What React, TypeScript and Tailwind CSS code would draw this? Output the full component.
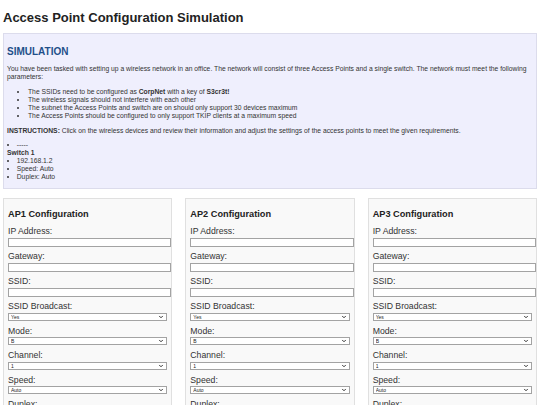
import { ChevronDown } from "lucide-react";

const requirements = [
  <>
    The SSIDs need to be configured as <strong>CorpNet</strong> with a key of <strong>S3cr3t!</strong>
  </>,
  <>The wireless signals should not interfere with each other</>,
  <>The subnet the Access Points and switch are on should only support 30 devices maximum</>,
  <>The Access Points should be configured to only support TKIP clients at a maximum speed</>,
];

const selects = [
  { label: "SSID Broadcast:", options: ["Yes", "No"] },
  { label: "Mode:", options: ["B", "G", "N", "AC"] },
  { label: "Channel:", options: ["1", "6", "11"] },
  { label: "Speed:", options: ["Auto", "11 Mbps", "54 Mbps"] },
  { label: "Duplex:", options: ["Auto", "Half", "Full"] },
  { label: "Security:", options: ["None", "WEP", "WPA (TKIP)", "WPA2 (AES)"] },
];

const Label = ({ text }: { text: string }) => (
  <label className="mb-[1.5px] block text-[8.7px] leading-[9px] text-[#333]">{text}</label>
);

const InputField = ({ label }: { label: string }) => (
  <div className="mb-[5.5px]">
    <Label text={label} />
    <input
      type="text"
      className="box-content block h-[7px] w-full border border-[#a3a3a3] bg-white px-[1px] text-[6px] outline-none"
    />
  </div>
);

const SelectField = ({ label, options }: { label: string; options: string[] }) => (
  <div className="mb-[6px]">
    <Label text={label} />
    <div className="relative">
      <select className="block h-[8px] w-full appearance-none border border-[#a3a3a3] bg-white py-0 pl-[2px] text-[5px] leading-[6px] text-[#222] outline-none">
        {options.map((o) => (
          <option key={o}>{o}</option>
        ))}
      </select>
      <ChevronDown
        size={6}
        strokeWidth={4}
        className="pointer-events-none absolute top-[1px] right-[3px] text-[#333]"
      />
    </div>
  </div>
);

const ApCard = ({ n }: { n: number }) => (
  <div className="border border-[#e0e0e0] bg-[#f9f9f9] p-[4px]">
    <h3 className="mt-[5px] mb-[7.5px] text-[9.2px] leading-[12px] font-bold text-[#222]">
      AP{n} Configuration
    </h3>
    <InputField label="IP Address:" />
    <InputField label="Gateway:" />
    <InputField label="SSID:" />
    {selects.map((s) => (
      <SelectField key={s.label} label={s.label} options={s.options} />
    ))}
    <InputField label="Key:" />
  </div>
);

export default function App() {
  return (
    <div className="min-h-screen bg-white px-[3px] pb-[10px] font-['Liberation_Sans',Arial,sans-serif] text-[#222]">
      <h1 className="mt-[10px] mb-[8px] text-[13px] leading-[15px] font-bold">
        Access Point Configuration Simulation
      </h1>

      <section className="border border-[#dcdcec] bg-[#efeffd] px-[3px] pt-[4px] text-[6.75px] leading-[8px] text-[#333]">
        <h2 className="mt-[7.5px] mb-[8px] text-[10px] leading-[11.5px] font-bold text-[#1f4f8a]">
          SIMULATION
        </h2>
        <p>
          You have been tasked with setting up a wireless network in an office. The network will consist
          of three Access Points and a single switch. The network must meet the following parameters:
        </p>
        <ul className="my-[6.75px] list-disc pl-[21px]">
          {requirements.map((r, i) => (
            <li key={i}>{r}</li>
          ))}
        </ul>
        <p>
          <strong>INSTRUCTIONS:</strong> Click on the wireless devices and review their information and
          adjust the settings of the access points to meet the given requirements.
        </p>
        <ul className="mt-[6.75px] list-inside list-disc">
          <li>-----</li>
        </ul>
        <div className="font-bold">Switch 1</div>
        <ul className="mb-[6.5px] list-inside list-disc">
          <li>192.168.1.2</li>
          <li>Speed: Auto</li>
          <li>Duplex: Auto</li>
        </ul>
      </section>

      <div className="mt-[9px] grid grid-cols-3 gap-[13px]">
        <ApCard n={1} />
        <ApCard n={2} />
        <ApCard n={3} />
      </div>
    </div>
  );
}
